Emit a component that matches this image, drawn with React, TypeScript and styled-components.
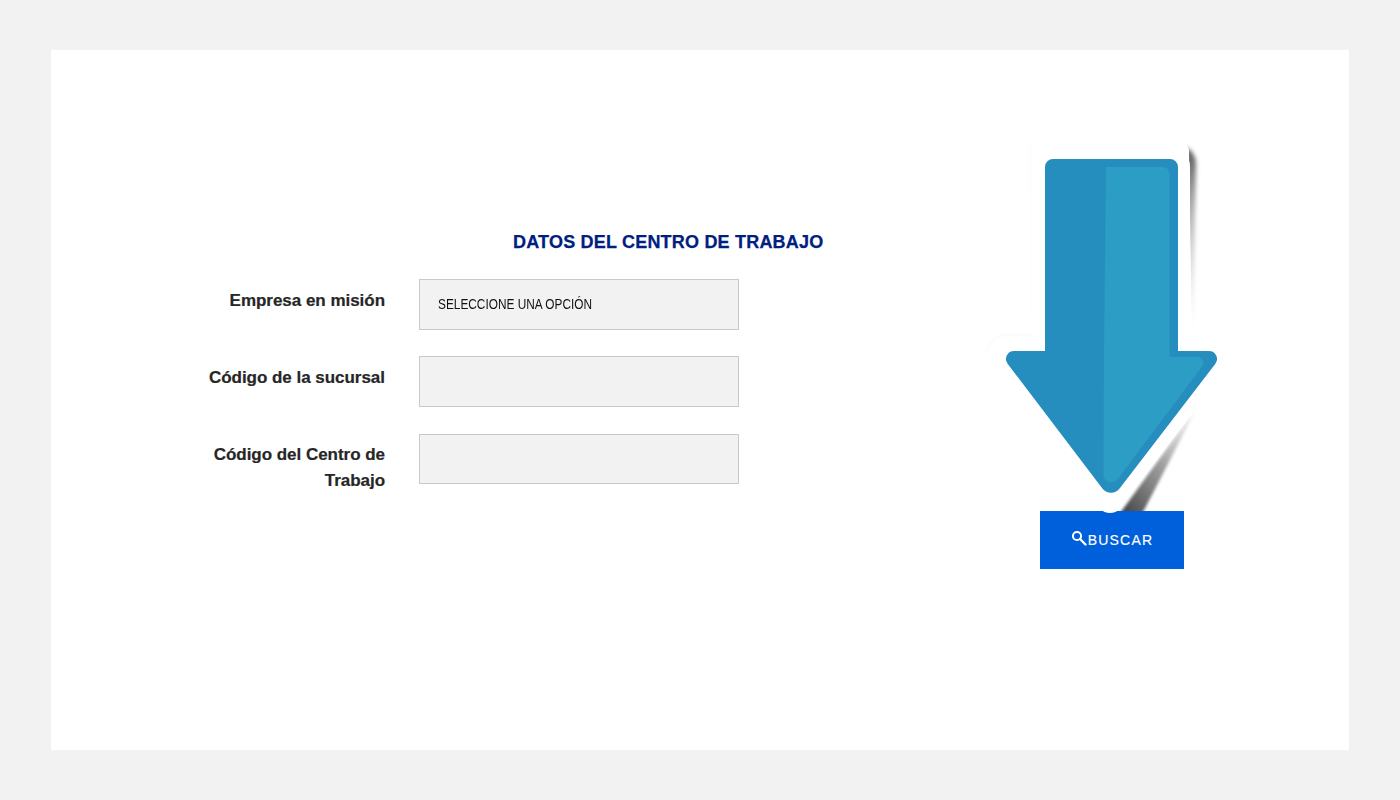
import React from "react";
import styled, { createGlobalStyle } from "styled-components";

const Global = createGlobalStyle`
  html, body { margin: 0; padding: 0; background: #f2f2f2; }
  * { box-sizing: border-box; }
`;

const Page = styled.div`
  width: 1400px;
  height: 800px;
  padding: 50px 51px;
  overflow: hidden;
`;

const Card = styled.main`
  width: 1298px;
  height: 700px;
  background: #fff;
  display: flex;
  justify-content: space-between;
  padding: 0 165px 0 139px;
`;

const Form = styled.form`
  padding-top: 180px;
  width: 700px;
`;

const Heading = styled.h2`
  margin: 0 0 25px 323px;
  font: bold 18px/24px "Liberation Sans", Arial, sans-serif;
  color: #00207f;
  white-space: nowrap;
  letter-spacing: 0.2px;
  -webkit-text-stroke: 0.25px #00207f;
`;

const Fields = styled.div`
  display: grid;
  grid-template-columns: 195px 320px;
  column-gap: 34px;
  row-gap: 26.7px;
  grid-auto-rows: 50.6px;
`;

const Label = styled.label`
  padding-top: 8.6px;
  text-align: right;
  font: bold 17px/26px "Liberation Sans", Arial, sans-serif;
  letter-spacing: -0.03px;
  color: #262626;
  -webkit-text-stroke: 0.2px #262626;
`;

const Select = styled.div`
  width: 320px;
  height: 50.6px;
  background: #f2f2f2;
  border: 1px solid #c9c9c9;
  display: flex;
  align-items: center;
  padding: 0 18px;
`;

const SelectValue = styled.span`
  display: inline-block;
  white-space: nowrap;
  font: 14px "Liberation Sans", Arial, sans-serif;
  color: #111;
  transform: scaleX(0.846);
  transform-origin: left center;
`;

const Input = styled.input`
  width: 320px;
  height: 50.6px;
  background: #f2f2f2;
  border: 1px solid #c9c9c9;
  border-radius: 0;
  outline: none;
`;

const Side = styled.aside`
  width: 144px;
  padding-top: 90px;
  display: flex;
  flex-direction: column;
`;

const ArrowArt = styled.svg`
  display: block;
  flex: none;
  width: 240px;
  height: 380px;
  margin: 0 0 -9px -55px;
  position: relative;
  z-index: 1;
`;

const SearchButton = styled.button`
  width: 144px;
  height: 58px;
  border: none;
  background: #0060db;
  color: #fff;
  display: flex;
  align-items: center;
  justify-content: center;
  gap: 1px;
  padding: 0;
  font: 14px "Liberation Sans", Arial, sans-serif;
  letter-spacing: 1.2px;
  -webkit-text-stroke: 0.15px #fff;
`;

const SearchGlyph = styled.svg`
  flex: none;
  width: 16px;
  height: 16px;
  transform: translateY(-2px);
`;

const ArrowOutline =
  "M1053 159H1170a8 8 0 0 1 8 8V351H1209a8 8 0 0 1 6.4 12.8L1120 488a11 11 0 0 1-18 0L1007.6 363.8A8 8 0 0 1 1014 351H1045V167a8 8 0 0 1 8-8Z";

function Arrow() {
  return (
    <ArrowArt viewBox="985 140 240 380" aria-hidden="true">
      <defs>
        <linearGradient id="topShade" x1="0" y1="0" x2="0" y2="1">
          <stop offset="0" stopColor="#444" stopOpacity="0.9" />
          <stop offset="0.35" stopColor="#777" stopOpacity="0.55" />
          <stop offset="1" stopColor="#bbb" stopOpacity="0" />
        </linearGradient>
        <linearGradient id="lowShade" x1="1" y1="0" x2="0" y2="1">
          <stop offset="0" stopColor="#aaa" stopOpacity="0" />
          <stop offset="0.5" stopColor="#888" stopOpacity="0.8" />
          <stop offset="1" stopColor="#3a3a3a" />
        </linearGradient>
        <filter id="soft" x="-40%" y="-10%" width="180%" height="120%">
          <feGaussianBlur stdDeviation="2" />
        </filter>
        <filter id="lowSoft" x="-10%" y="-10%" width="120%" height="120%">
          <feGaussianBlur stdDeviation="1.6" />
        </filter>
        <filter id="faint" x="-10%" y="-10%" width="120%" height="120%">
          <feGaussianBlur stdDeviation="0.8" />
        </filter>
        <clipPath id="aboveButton">
          <rect x="985" y="140" width="240" height="371" />
        </clipPath>
      </defs>
      <path d="M1031 146L1032 335H1002Q992 337 986 352" fill="none" stroke="#f8f8f8" strokeWidth="1.5" filter="url(#faint)" />
      <path d="M1184 147Q1195 151 1196 163L1193 330H1186Z" fill="url(#topShade)" filter="url(#soft)" />
      <g clipPath="url(#aboveButton)">
        <path d="M1199 404L1118 516H1141Z" fill="url(#lowShade)" filter="url(#lowSoft)" />
      </g>
      <path d="M1039 143H1181a8 8 0 0 1 8 8L1192 345H1039a8 8 0 0 1-8-8V151a8 8 0 0 1 8-8Z" fill="#fff" />
      <path d={ArrowOutline} fill="#fff" stroke="#fff" strokeWidth="24" strokeLinejoin="round" />
      <circle cx="1110" cy="499" r="14" fill="#fff" />
      <path d={ArrowOutline} fill="#268ebf" />
      <path
        d="M1106 167H1163a6.500 6.500 0 0 1 6.500 6.500V357H1197a6 6 0 0 1 5 9.500L1120 476a11 11 0 0 1-9 6H1110a8 8 0 0 1-6.500-5.500L1104 351Z"
        fill="#2c9dc5"
      />
    </ArrowArt>
  );
}

export default function App() {
  return (
    <Page>
      <Global />
      <Card>
        <Form>
          <Heading>DATOS DEL CENTRO DE TRABAJO</Heading>
          <Fields>
            <Label>Empresa en misión</Label>
            <Select role="combobox" aria-expanded="false">
              <SelectValue>SELECCIONE UNA OPCIÓN</SelectValue>
            </Select>
            <Label htmlFor="sucursal">Código de la sucursal</Label>
            <Input id="sucursal" />
            <Label htmlFor="centro">Código del Centro de Trabajo</Label>
            <Input id="centro" />
          </Fields>
        </Form>
        <Side>
          <Arrow />
          <SearchButton type="button">
            <SearchGlyph viewBox="0 0 16 16" aria-hidden="true">
              <circle cx="6" cy="6" r="4.1" fill="none" stroke="currentColor" strokeWidth="2" />
              <path d="M9 9L14.500 14.500" fill="none" stroke="currentColor" strokeWidth="2.400" strokeLinecap="round" />
            </SearchGlyph>
            BUSCAR
          </SearchButton>
        </Side>
      </Card>
    </Page>
  );
}
